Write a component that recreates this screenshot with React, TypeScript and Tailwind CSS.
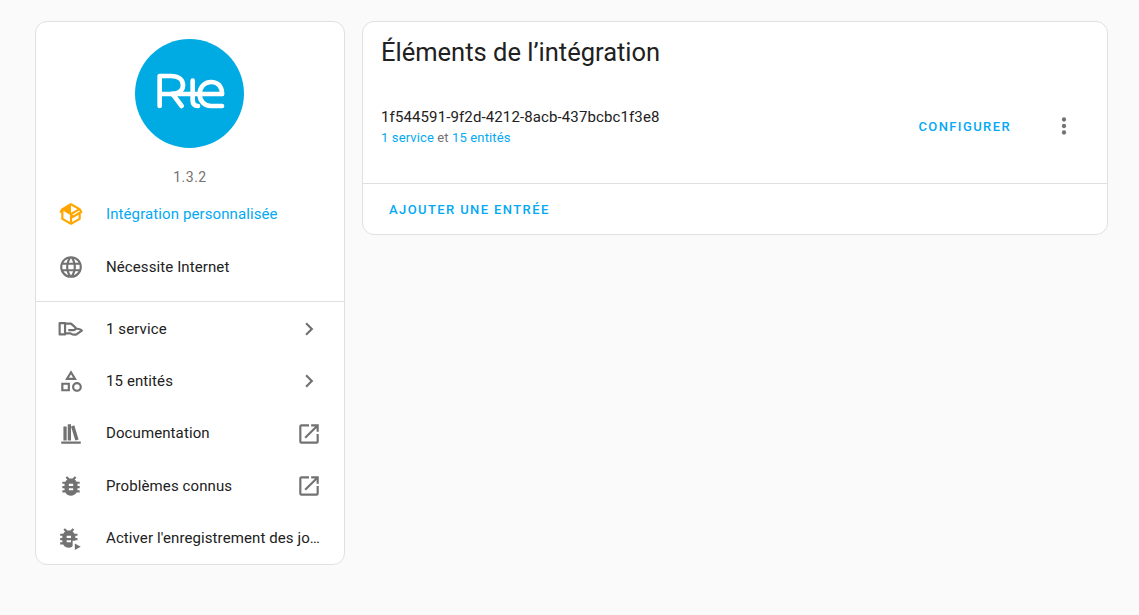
import React from 'react';

const paths = {
  package:
    'M2,10.96C1.5,10.68 1.35,10.07 1.63,9.59L3.13,7C3.24,6.8 3.41,6.66 3.6,6.58L11.43,2.18C11.59,2.06 11.79,2 12,2C12.21,2 12.41,2.06 12.57,2.18L20.47,6.62C20.66,6.72 20.82,6.88 20.91,7.08L22.36,9.6C22.64,10.08 22.47,10.69 22,10.96L21,11.54V16.5C21,16.88 20.79,17.21 20.47,17.38L12.57,21.82C12.41,21.94 12.21,22 12,22C11.79,22 11.59,21.94 11.43,21.82L3.53,17.38C3.21,17.21 3,16.88 3,16.5V10.96C2.7,11.13 2.32,11.14 2,10.96M12,4.15V4.15L12,10.85V10.85L17.96,7.5L12,4.15M5,15.91L11,19.29V12.58L5,9.21V15.91M19,15.91V12.69L14,15.59C13.67,15.77 13.3,15.76 13,15.6V19.29L19,15.91M13.85,13.36L20.13,9.73L19.55,8.72L13.27,12.35L13.85,13.36Z',
  web: 'M16.36,14C16.44,13.34 16.5,12.68 16.5,12C16.5,11.32 16.44,10.66 16.36,10H19.74C19.9,10.64 20,11.31 20,12C20,12.69 19.9,13.36 19.74,14M14.59,19.56C15.19,18.45 15.65,17.25 15.97,16H18.92C17.96,17.65 16.43,18.93 14.59,19.56M14.34,14H9.66C9.56,13.34 9.5,12.68 9.5,12C9.5,11.32 9.56,10.65 9.66,10H14.34C14.43,10.65 14.5,11.32 14.5,12C14.5,12.68 14.43,13.34 14.34,14M12,19.96C11.17,18.76 10.5,17.43 10.09,16H13.91C13.5,17.43 12.83,18.76 12,19.96M8,8H5.08C6.03,6.34 7.57,5.06 9.4,4.44C8.8,5.55 8.35,6.75 8,8M5.08,16H8C8.35,17.25 8.8,18.45 9.4,19.56C7.57,18.93 6.03,17.65 5.08,16M4.26,14C4.1,13.36 4,12.69 4,12C4,11.31 4.1,10.64 4.26,10H7.64C7.56,10.66 7.5,11.32 7.5,12C7.5,12.68 7.56,13.34 7.64,14M12,4.03C12.83,5.23 13.5,6.57 13.91,8H10.09C10.5,6.57 11.17,5.23 12,4.03M18.92,8H15.97C15.65,6.75 15.19,5.55 14.59,4.44C16.43,5.07 17.96,6.34 18.92,8M12,2C6.47,2 2,6.5 2,12A10,10 0 0,0 12,22A10,10 0 0,0 22,12A10,10 0 0,0 12,2Z',
  shape:
    'M11,13.5V21.5H3V13.5H11M9,15.5H5V19.5H9V15.5M12,2L17.5,11H6.5L12,2M12,5.86L10.08,9H13.92L12,5.86M17.5,13C20,13 22,15 22,17.5C22,20 20,22 17.5,22C15,22 13,20 13,17.5C13,15 15,13 17.5,13M17.5,15A2.5,2.5 0 0,0 15,17.5A2.5,2.5 0 0,0 17.5,20A2.5,2.5 0 0,0 20,17.5A2.5,2.5 0 0,0 17.5,15Z',
  bookshelf: 'M9 3V18H12V3H9M12 5L16 18L19 17L15 4L12 5M5 5V18H8V5H5M3 19V21H21V19H3Z',
  bug: 'M14,12H10V10H14M14,16H10V14H14M20,8H17.19C16.74,7.22 16.12,6.55 15.37,6.04L17,4.41L15.59,3L13.42,5.17C12.96,5.06 12.5,5 12,5C11.5,5 11.04,5.06 10.59,5.17L8.41,3L7,4.41L8.62,6.04C7.88,6.55 7.26,7.22 6.81,8H4V10H6.09C6.04,10.33 6,10.66 6,11V12H4V14H6V15C6,15.34 6.04,15.67 6.09,16H4V18H6.81C8.47,20.87 12.14,21.84 15,20.18C15.91,19.66 16.67,18.9 17.19,18H20V16H17.91C17.96,15.67 18,15.34 18,15V14H20V12H18V11C18,10.66 17.96,10.33 17.91,10H20V8Z',
  openInNew:
    'M14,3V5H17.59L7.76,14.83L9.17,16.24L19,6.41V10H21V3M19,19H5V5H12V3H5C3.89,3 3,3.9 3,5V19A2,2 0 0,0 5,21H19A2,2 0 0,0 21,19V12H19V19Z',
  chevron: 'M8.59,16.58L13.17,12L8.59,7.41L10,6L16,12L10,18L8.59,16.58Z',
  dots: 'M12,16A2,2 0 0,1 14,18A2,2 0 0,1 12,20A2,2 0 0,1 10,18A2,2 0 0,1 12,16M12,10A2,2 0 0,1 14,12A2,2 0 0,1 12,14A2,2 0 0,1 10,12A2,2 0 0,1 12,10M12,4A2,2 0 0,1 14,6A2,2 0 0,1 12,8A2,2 0 0,1 10,6A2,2 0 0,1 12,4Z',
};

const Icon = ({ d, className = 'text-[#727272]' }: { d: string; className?: string }) => (
  <svg viewBox="0 0 24 24" className={`w-[26px] h-[26px] shrink-0 fill-current ${className}`}>
    <path d={d} />
  </svg>
);

const HandIcon = () => (
  <svg viewBox="0 0 24 24" className="w-[26px] h-[26px] shrink-0 text-[#727272]" fill="none" stroke="currentColor" strokeWidth="2" strokeLinejoin="round">
    <path d="M1.5 6.5H6.5V17H1.5Z" />
    <path d="M6.5 7H12L16 10.5C16.8 11.5 16 13 14.5 13H9.5" />
    <path d="M6.5 16H11.5C14 17.5 15.5 17.5 17 17L22 13.5C21 12 18 11.5 15.5 11.5" />
  </svg>
);

const BugPlayIcon = () => (
  <svg viewBox="0 0 24 24" className="w-[26px] h-[26px] shrink-0 text-[#727272] fill-current">
    <path d={paths.bug} transform="translate(-2 0)" />
    <path d="M13.5 14.5H24V24H13.5Z" fill="#ffffff" />
    <path d="M15.5 17V23L21 20Z" />
  </svg>
);

const RteLogo = () => (
  <svg viewBox="297 57 327 327" className="w-[109px] h-[109px]">
    <circle cx="460.5" cy="220.5" r="163.5" fill="#00abe3" />
    <g fill="none" stroke="#ffffff" strokeWidth="14" strokeLinecap="round" strokeLinejoin="round">
      <path d="M371 258V168H405C428 168 441 180 441 196C441 212 428 222 405 222H371" />
      <path d="M410 222L437 258" />
      <path d="M405 222H558" />
      <path d="M470 182V240C470 252 476 258 486 258" />
      <path d="M558 222C558 198 544 186 525 186C505 186 491 202 491 222C491 243 505 258 525 258H558" />
    </g>
  </svg>
);

const Row = ({ icon, label, right, className = 'text-[#212121]' }: { icon: React.ReactNode; label: string; right?: React.ReactNode; className?: string }) => (
  <div className="flex items-center h-[52.25px] pl-[22px] pr-[22px]">
    {icon}
    <span className={`ml-[22px] flex-1 min-w-0 truncate text-[15px] tracking-[0.1px] ${className}`}>{label}</span>
    {right}
  </div>
);

const App: React.FC = () => {
  return (
    <div className="h-screen bg-[#fafafa] overflow-hidden font-['Roboto',sans-serif] text-[#212121]">
      <div className="flex items-start gap-[17px] pt-[21px] pl-[35px]">
        {/* Left info card */}
        <div className="w-[310px] h-[544px] bg-white border border-[#e0e0e0] rounded-xl overflow-hidden">
          <div className="flex justify-center pt-[17px] pr-[2px]">
            <RteLogo />
          </div>
          <div className="mt-[19px] text-center text-[14px] leading-5 tracking-[0.5px] text-[#727272]">1.3.2</div>
          <div className="mt-[1px] border-b border-[#e0e0e0] pb-[7.5px]">
            <Row icon={<Icon d={paths.package} className="text-[#ffa600]" />} label="Intégration personnalisée" className="text-[#03a9f4]" />
            <div className="pt-[0.5px]">
              <Row icon={<Icon d={paths.web} />} label="Nécessite Internet" />
            </div>
          </div>
          <div className="pt-[1.4px]">
            <Row icon={<HandIcon />} label="1 service" right={<Icon d={paths.chevron} />} />
            <Row icon={<Icon d={paths.shape} />} label="15 entités" right={<Icon d={paths.chevron} />} />
            <Row icon={<Icon d={paths.bookshelf} />} label="Documentation" right={<Icon d={paths.openInNew} />} />
            <Row icon={<Icon d={paths.bug} />} label="Problèmes connus" right={<Icon d={paths.openInNew} />} />
            <Row icon={<BugPlayIcon />} label="Activer l'enregistrement des journaux de débogage" />
          </div>
        </div>

        {/* Right entries card */}
        <div className="w-[746px] bg-white border border-[#e0e0e0] rounded-xl overflow-hidden">
          <h1 className="pt-[14px] pl-[18px] text-[25.5px] leading-8 font-normal">Éléments de l’intégration</h1>
          <div className="flex items-center h-[116px] pl-[18px] pr-[30px] border-b border-[#e0e0e0]">
            <div className="flex-1 min-w-0 pt-[3px]">
              <div className="text-[15px] tracking-[0.12px] leading-5">1f544591-9f2d-4212-8acb-437bcbc1f3e8</div>
              <div className="text-[13px] tracking-[0.13px] leading-[21px] text-[#727272]">
                <span className="text-[#03a9f4]">1 service</span> et <span className="text-[#03a9f4]">15 entités</span>
              </div>
            </div>
            <span className="text-[13px] font-medium tracking-[1.4px] text-[#03a9f4] mr-[40px] pt-[2px]">CONFIGURER</span>
            <Icon d={paths.dots} />
          </div>
          <div className="flex items-center h-[50px] pl-[26px] pt-[2px]">
            <span className="text-[13px] font-medium tracking-[1.4px] text-[#03a9f4]">AJOUTER UNE ENTRÉE</span>
          </div>
        </div>
      </div>
    </div>
  );
};

export default App;
